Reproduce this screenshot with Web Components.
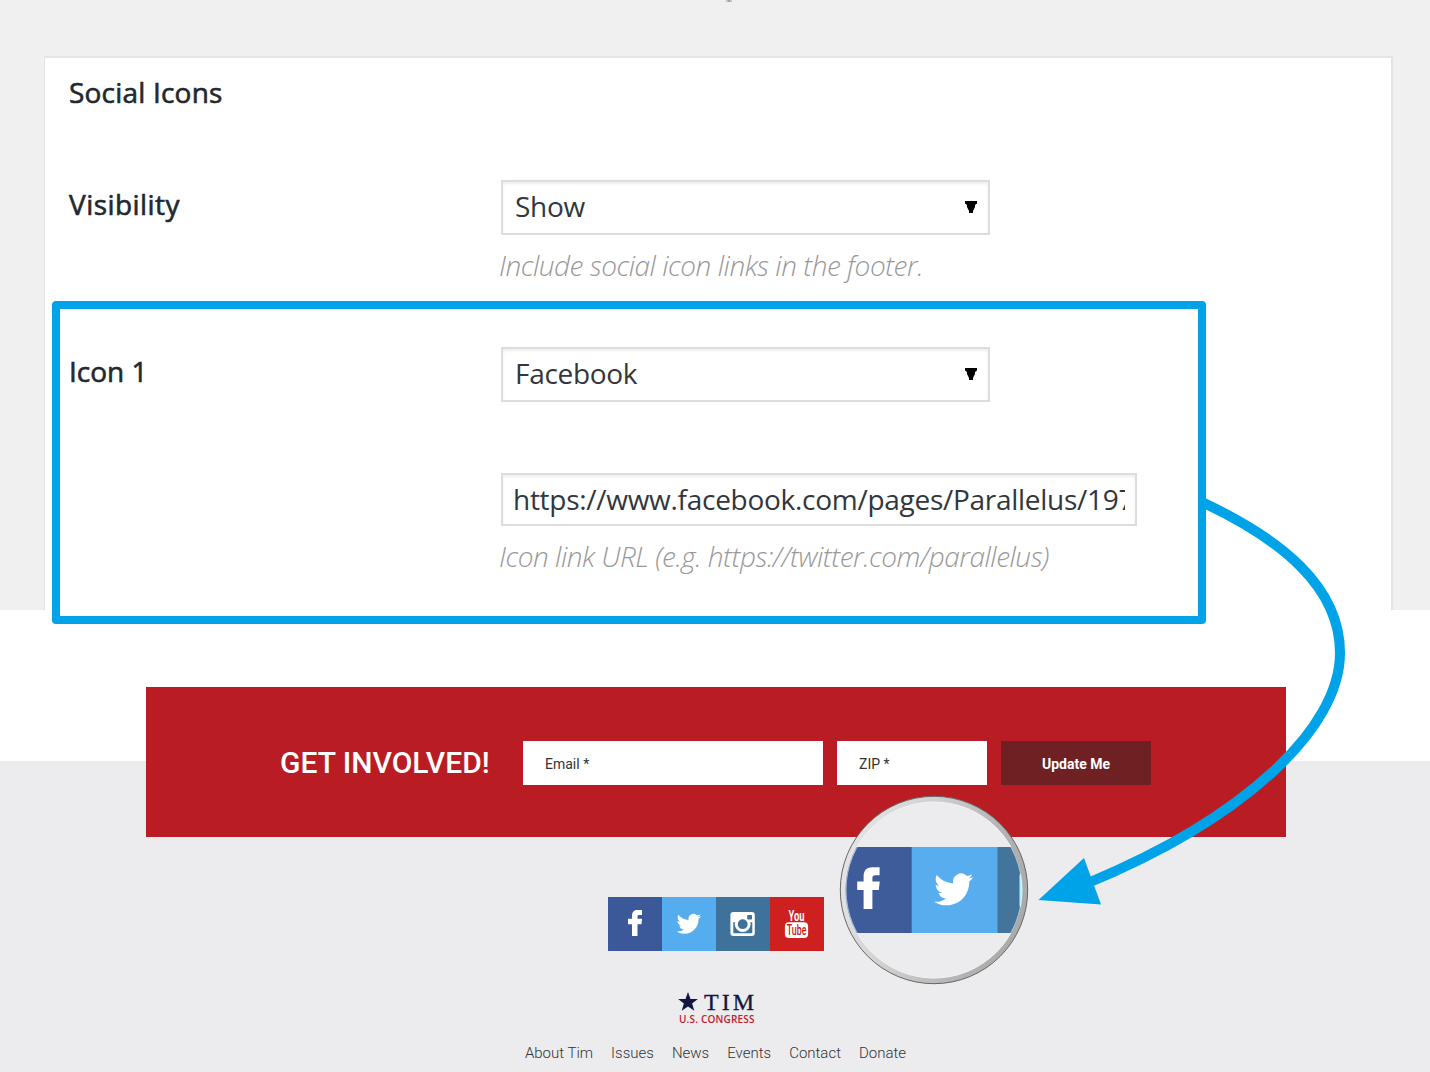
<!DOCTYPE html>
<html lang="en">
<head>
<meta charset="utf-8">
<title>Social Icons</title>
<style>
html,body{margin:0;padding:0}
body{width:1430px;height:1072px;overflow:hidden;background:#fff;font-family:"Open Sans",sans-serif}
</style>
</head>
<body>
<demo-page></demo-page>
<script>
const define = (name, html) => {
  const tpl = document.createElement('template');
  tpl.innerHTML = html;
  customElements.define(name, class extends HTMLElement {
    constructor() {
      super();
      this.attachShadow({ mode: 'open' }).appendChild(tpl.content.cloneNode(true));
    }
  });
};

const glyphs = {
  facebook: '<path fill="#fff" d="M24 39V27.200h-4v-5.400h4v-3c0-3.900 2-5.800 5.600-5.800H34v5h-2.700c-1.300 0-1.800.6-1.800 1.800v2h4.600l-.6 5.400h-4V39z"/>',
  twitter: '<path fill="#fff" transform="translate(14.600 14.600) scale(1.020)" d="M23.953 4.57a10 10 0 01-2.825.775 4.958 4.958 0 002.163-2.723c-.951.555-2.005.959-3.127 1.184a4.92 4.92 0 00-8.384 4.482C7.69 8.095 4.067 6.13 1.64 3.162a4.822 4.822 0 00-.666 2.475c0 1.71.87 3.213 2.188 4.096a4.904 4.904 0 01-2.228-.616v.06a4.923 4.923 0 003.946 4.827 4.996 4.996 0 01-2.212.085 4.936 4.936 0 004.604 3.417 9.867 9.867 0 01-6.102 2.105c-.39 0-.779-.023-1.17-.067a13.995 13.995 0 007.557 2.209c9.053 0 13.998-7.496 13.998-13.985 0-.21 0-.42-.015-.63A9.935 9.935 0 0024 4.59z"/>',
  instagram: '<rect x="14.400" y="15" width="24.400" height="24" rx="3" fill="#fff"/><path class="cut" d="M17.300 25.200h19v9.800q0 1.200-1.200 1.200H18.500q-1.200 0-1.200-1.200z"/><circle cx="26.700" cy="27.200" r="7.900" fill="#fff"/><circle class="cut" cx="26.700" cy="27.200" r="4.900"/><rect class="cut" x="31.200" y="18" width="4.800" height="4.500" rx=".7"/>',
  youtube: '<text x="18.500" y="24" font-family="Roboto" font-weight="700" font-size="15" textLength="16" lengthAdjust="spacingAndGlyphs" fill="#fff">You</text><rect x="14.900" y="25.300" width="23.200" height="15.700" rx="4" fill="#fff"/><text x="16.800" y="38" font-family="Roboto" font-weight="500" font-size="14" textLength="19.700" lengthAdjust="spacingAndGlyphs" fill="#ce2020">Tube</text>'
};
const colors = { facebook: '#3b5998', twitter: '#55acee', instagram: '#3f729b', youtube: '#cd201f' };

customElements.define('social-tile', class extends HTMLElement {
  connectedCallback() {
    const n = this.getAttribute('network');
    this.attachShadow({ mode: 'open' }).innerHTML =
      `<style>:host{display:block;width:54px;height:54px;background:${colors[n]}}svg{display:block}.cut{fill:${colors[n]}}</style>
       <svg width="54" height="54" viewBox="0 0 54 54">${glyphs[n]}</svg>`;
  }
});

define('setting-row', `<style>
:host{display:grid;grid-template-columns:431px 1fr;align-items:start}
.label{font-size:28px;line-height:48px;font-weight:400;-webkit-text-stroke:.6px #23282d;color:#23282d;white-space:nowrap;letter-spacing:var(--label-ls,0)}
.field{display:flex;flex-direction:column;align-items:flex-start;padding-left:1px}
</style><div class="label"><slot name="label"></slot></div><div class="field"><slot></slot></div>`);

define('select-box', `<style>
:host{display:flex;justify-content:space-between;align-items:center;box-sizing:border-box;width:489px;height:55px;border:2px solid #ddd;background:#fff;box-shadow:inset 0 2px 3px rgba(0,0,0,.07);padding:0 11px 0 12px;font-size:28px;line-height:50px;color:#32373c}
.t{letter-spacing:-.3px;margin-top:-4px}
svg{display:block;margin-top:-2px}
</style><span class="t"><slot></slot></span><svg width="12" height="12" viewBox="0 0 12 12"><path d="M0 0h12v2.500L10 4v2L8 10v2H4v-2L2 6V4L0 2.500z"/></svg>`);

define('text-box', `<style>
:host{display:flex;align-items:center;box-sizing:border-box;width:636px;height:53px;border:2px solid #ddd;background:#fff;box-shadow:inset 0 2px 3px rgba(0,0,0,.07);padding:0 10px;font-size:28px;color:#32373c}
.t{overflow:hidden;white-space:nowrap;letter-spacing:-.28px;line-height:48px;width:612px;margin-top:-1px}
</style><span class="t"><slot></slot></span>`);

define('field-hint', `<style>
:host{display:block;font-size:28px;line-height:40px;font-style:italic;font-weight:300;color:#999;white-space:nowrap;margin-left:-2px;letter-spacing:-.48px}
</style><slot></slot>`);

define('admin-panel', `<style>
:host{display:flex;flex-direction:column;box-sizing:border-box;height:610px;background:#f0f0f0;padding:0 37px 0 44px}
.scrap{height:2px;width:6px;margin:0 0 54px 682px;background:linear-gradient(90deg,#d9bda8 2px,#aaa0a0 2px 4px,#a5cbe6 4px)}
.card{flex:1;background:#fff;border:solid #e5e5e5;border-width:2px 2px 0 1px;padding:9px 24px 0;display:flex;flex-direction:column}
h2{margin:0 0 1px;font-size:28px;line-height:50px;font-weight:400;-webkit-text-stroke:.6px #23282d;letter-spacing:.2px;color:#23282d}
</style><div class="scrap"></div><div class="card"><h2><slot name="title"></slot></h2><slot></slot></div>`);

define('signup-banner', `<style>
:host{display:flex;align-items:center;box-sizing:border-box;width:1140px;height:150px;background:#b91d23;padding:2px 0 0 134px;font-family:Roboto,sans-serif}
h3{margin:-1px 0 0;width:243px;font-size:30px;line-height:36px;font-weight:500;color:#fff;white-space:nowrap}
.in,.btn{height:44px;box-sizing:border-box;font-size:14px;line-height:46px;color:#333}
.in{background:#fff;padding-left:22px;margin-right:14px}
.e{width:300px}.z{width:150px}
.btn{width:150px;background:#6e2023;color:#fff;font-weight:700;text-align:center}
</style><h3>GET INVOLVED!</h3><div class="in e">Email *</div><div class="in z">ZIP *</div><div class="btn">Update Me</div>`);

define('campaign-logo', `<style>
:host{display:flex;flex-direction:column;width:78px}
.top{display:flex;align-items:center;height:24px}
svg{display:block;flex:none}
b{font:400 24px/24px "Liberation Serif",serif;color:#131740;-webkit-text-stroke:.3px #131740;letter-spacing:3px;margin:0 -4px 0 6px}
small{font:600 10px/11px "Open Sans",sans-serif;color:#c4202b;white-space:nowrap;margin-left:1px;letter-spacing:.18px}
</style><div class="top"><svg width="20" height="20" viewBox="0 0 20 20"><path fill="#131740" d="M10 0l2.500 6.900 7.400.1-5.800 4.500 2.200 7.200-6.300-4.300-6.300 4.300 2.200-7.200L.1 7l7.400-.1z"/></svg><b>TIM</b></div><small>U.S. CONGRESS</small>`);

define('footer-nav', `<style>
:host{display:flex;gap:18px;font:300 15px/20px Roboto,sans-serif;color:#333;white-space:nowrap}
</style><span>About Tim</span><span>Issues</span><span>News</span><span>Events</span><span>Contact</span><span>Donate</span>`);

define('site-footer', `<style>
:host{display:flex;flex-direction:column;align-items:center;box-sizing:border-box;height:462px;padding-top:77px;padding-left:2px;background:linear-gradient(#fff 151px,#ececee 151px)}
.tiles{display:flex;margin-top:60px}
campaign-logo{margin:39px 0 0 2px}
footer-nav{margin:18px 1px 0 0}
</style><signup-banner></signup-banner>
<div class="tiles"><social-tile network="facebook"></social-tile><social-tile network="twitter"></social-tile><social-tile network="instagram"></social-tile><social-tile network="youtube"></social-tile></div>
<campaign-logo></campaign-logo><footer-nav></footer-nav>`);

define('callout-layer', `<style>
:host{position:absolute;inset:0;pointer-events:none}
svg{display:block}
</style><svg width="1430" height="1072" viewBox="0 0 1430 1072">
<defs><clipPath id="lens"><circle cx="934" cy="890" r="88.500"/></clipPath>
<linearGradient id="rim" x1="0" y1=".3" x2="1" y2=".6"><stop offset="0" stop-color="#e6e6e6"/><stop offset=".35" stop-color="#d2d2d2"/><stop offset=".75" stop-color="#b4b4b4"/><stop offset="1" stop-color="#a9a9a9"/></linearGradient></defs>
<rect x="56" y="305" width="1146" height="315" fill="none" stroke="#00a2e8" stroke-width="8" stroke-linejoin="round"/>
<circle cx="934" cy="890" r="93.700" fill="url(#rim)" stroke="#666" stroke-width="1"/>
<circle cx="934" cy="890" r="88.500" fill="#ececee"/>
<g clip-path="url(#lens)">
<rect x="840" y="847" width="72" height="86" fill="#3f5c9a"/>
<rect x="911.700" y="847" width="85.500" height="86" fill="#58adee"/>
<rect x="997.200" y="847" width="35" height="86" fill="#42749c"/>
<g transform="translate(825.200 846.500) scale(1.600)">${glyphs.facebook}</g>
<g transform="translate(910.700 846.500) scale(1.600)">${glyphs.twitter}</g>
<rect x="1019.500" y="873" width="12" height="35" rx="3" fill="#b5f0fa"/>
</g>
<circle cx="934" cy="890" r="88" fill="none" stroke="#f4f4f4" stroke-opacity=".6"/>
<path d="M1204 503C1280 539 1340 586 1340 653C1340 728 1245 818 1088 883" fill="none" stroke="#00a2e8" stroke-width="10"/>
<path d="M1038.500 900L1084 858L1101 904.600z" fill="#00a2e8"/>
</svg>`);

define('demo-page', `<style>
:host{display:block;position:relative;width:1430px;height:1072px;overflow:hidden}
.r1{margin-top:62px;--label-ls:.45px}.r2{margin-top:62px}
.h1{margin-top:10px}.h2{margin-top:10px}
text-box{margin-top:71px}
</style>
<admin-panel><span slot="title">Social Icons</span>
<setting-row class="r1"><span slot="label">Visibility</span><select-box>Show</select-box><field-hint class="h1">Include social icon links in the footer.</field-hint></setting-row>
<setting-row class="r2"><span slot="label">Icon 1</span><select-box>Facebook</select-box><text-box>https://www.facebook.com/pages/Parallelus/197</text-box><field-hint class="h2">Icon link URL (e.g. https://twitter.com/parallelus)</field-hint></setting-row>
</admin-panel>
<site-footer></site-footer>
<callout-layer></callout-layer>`);
</script>
</body>
</html>
